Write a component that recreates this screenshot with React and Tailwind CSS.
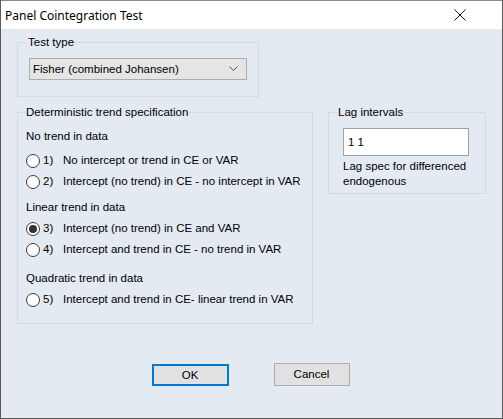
import React from "react";

const font = { fontFamily: '"Liberation Sans", Arial, sans-serif' };

function Radio({ checked, num, label }) {
  return (
    <div className="flex items-center h-[21px]">
      <span className="w-[14px] h-[14px] rounded-full border border-[#3a3a3a] bg-white flex items-center justify-center shrink-0">
        {checked && <span className="w-[8px] h-[8px] rounded-full bg-[#333333]" />}
      </span>
      <span className="ml-[3px] w-[20px]">{num}</span>
      <span>{label}</span>
    </div>
  );
}

export default function App() {
  return (
    <div
      className="w-[503px] h-[419px] bg-[#e4eaf2] border border-t-0 border-[#5a5a5a] flex flex-col text-[11.5px] leading-[15px] text-black overflow-hidden"
      style={font}
    >
      <div className="h-[29px] bg-white flex items-center justify-between shrink-0 border-t border-[#8a8a8a]">
        <span className="ml-[4px] text-[12px] font-['Noto_Sans',sans-serif] text-black">Panel Cointegration Test</span>
        <svg width="12" height="12" viewBox="0 0 12 12" className="mr-[36px]">
          <path d="M0.5 0.5 L11.5 11.5 M11.5 0.5 L0.5 11.5" stroke="#111" strokeWidth="1" />
        </svg>
      </div>

      <div className="flex flex-col">
        <fieldset className="ml-[16px] mt-[7px] w-[240px] h-[61px] border border-[#d3dae3] px-[11px]">
          <legend className="ml-[-2px] px-[1px] leading-[13px]">Test type</legend>
          <div className="mt-[9px] w-[218px] h-[22px] border border-[#adadad] bg-[#e5e5e5] flex items-center justify-between pl-[3px] pr-[8px]">
            <span>Fisher (combined Johansen)</span>
            <svg width="9" height="6" viewBox="0 0 9 6">
              <path d="M0.5 0.5 L4.5 4.5 L8.5 0.5" stroke="#555" strokeWidth="1" fill="none" />
            </svg>
          </div>
        </fieldset>

        <div className="flex mt-[9px] ml-[16px]">
          <fieldset className="w-[296px] h-[218px] border border-[#d3dae3] pl-[8px]">
            <legend className="ml-[-1px] px-[1px] leading-[13px]">Deterministic trend specification</legend>
            <div className="mt-[10px]">No trend in data</div>
            <div className="mt-[6px]">
              <Radio num="1)" label="No intercept or trend in CE or VAR" />
              <Radio num="2)" label="Intercept (no trend) in CE - no intercept in VAR" />
            </div>
            <div className="mt-[8px]">Linear trend in data</div>
            <div className="mt-[3px]">
              <Radio checked num="3)" label="Intercept (no trend) in CE and VAR" />
              <Radio num="4)" label="Intercept and trend in CE - no trend in VAR" />
            </div>
            <div className="mt-[11px]">Quadratic trend in data</div>
            <div className="mt-[3px]">
              <Radio num="5)" label="Intercept and trend in CE- linear trend in VAR" />
            </div>
          </fieldset>

          <fieldset className="ml-[15px] w-[158px] h-[88px] border border-[#d3dae3] pl-[14px]">
            <legend className="ml-[-6px] px-[1px] leading-[13px]">Lag intervals</legend>
            <div className="mt-[9px] w-[126px] h-[28px] border border-[#a0a4aa] bg-white flex items-center pl-[4px]">
              1 1
            </div>
            <div className="mt-[3px] leading-[15px]">
              Lag spec for differenced
              <br />
              endogenous
            </div>
          </fieldset>
        </div>

        <div className="flex justify-center gap-[45px] mt-[40px] pr-[2px]">
          <button className="w-[77px] h-[22px] border-2 border-[#0078d7] bg-[#e1e1e1] text-[11.5px]">OK</button>
          <button className="w-[76px] h-[23px] -mt-[1px] border border-[#adadad] bg-[#e1e1e1] text-[11.5px]">Cancel</button>
        </div>
      </div>
    </div>
  );
}
